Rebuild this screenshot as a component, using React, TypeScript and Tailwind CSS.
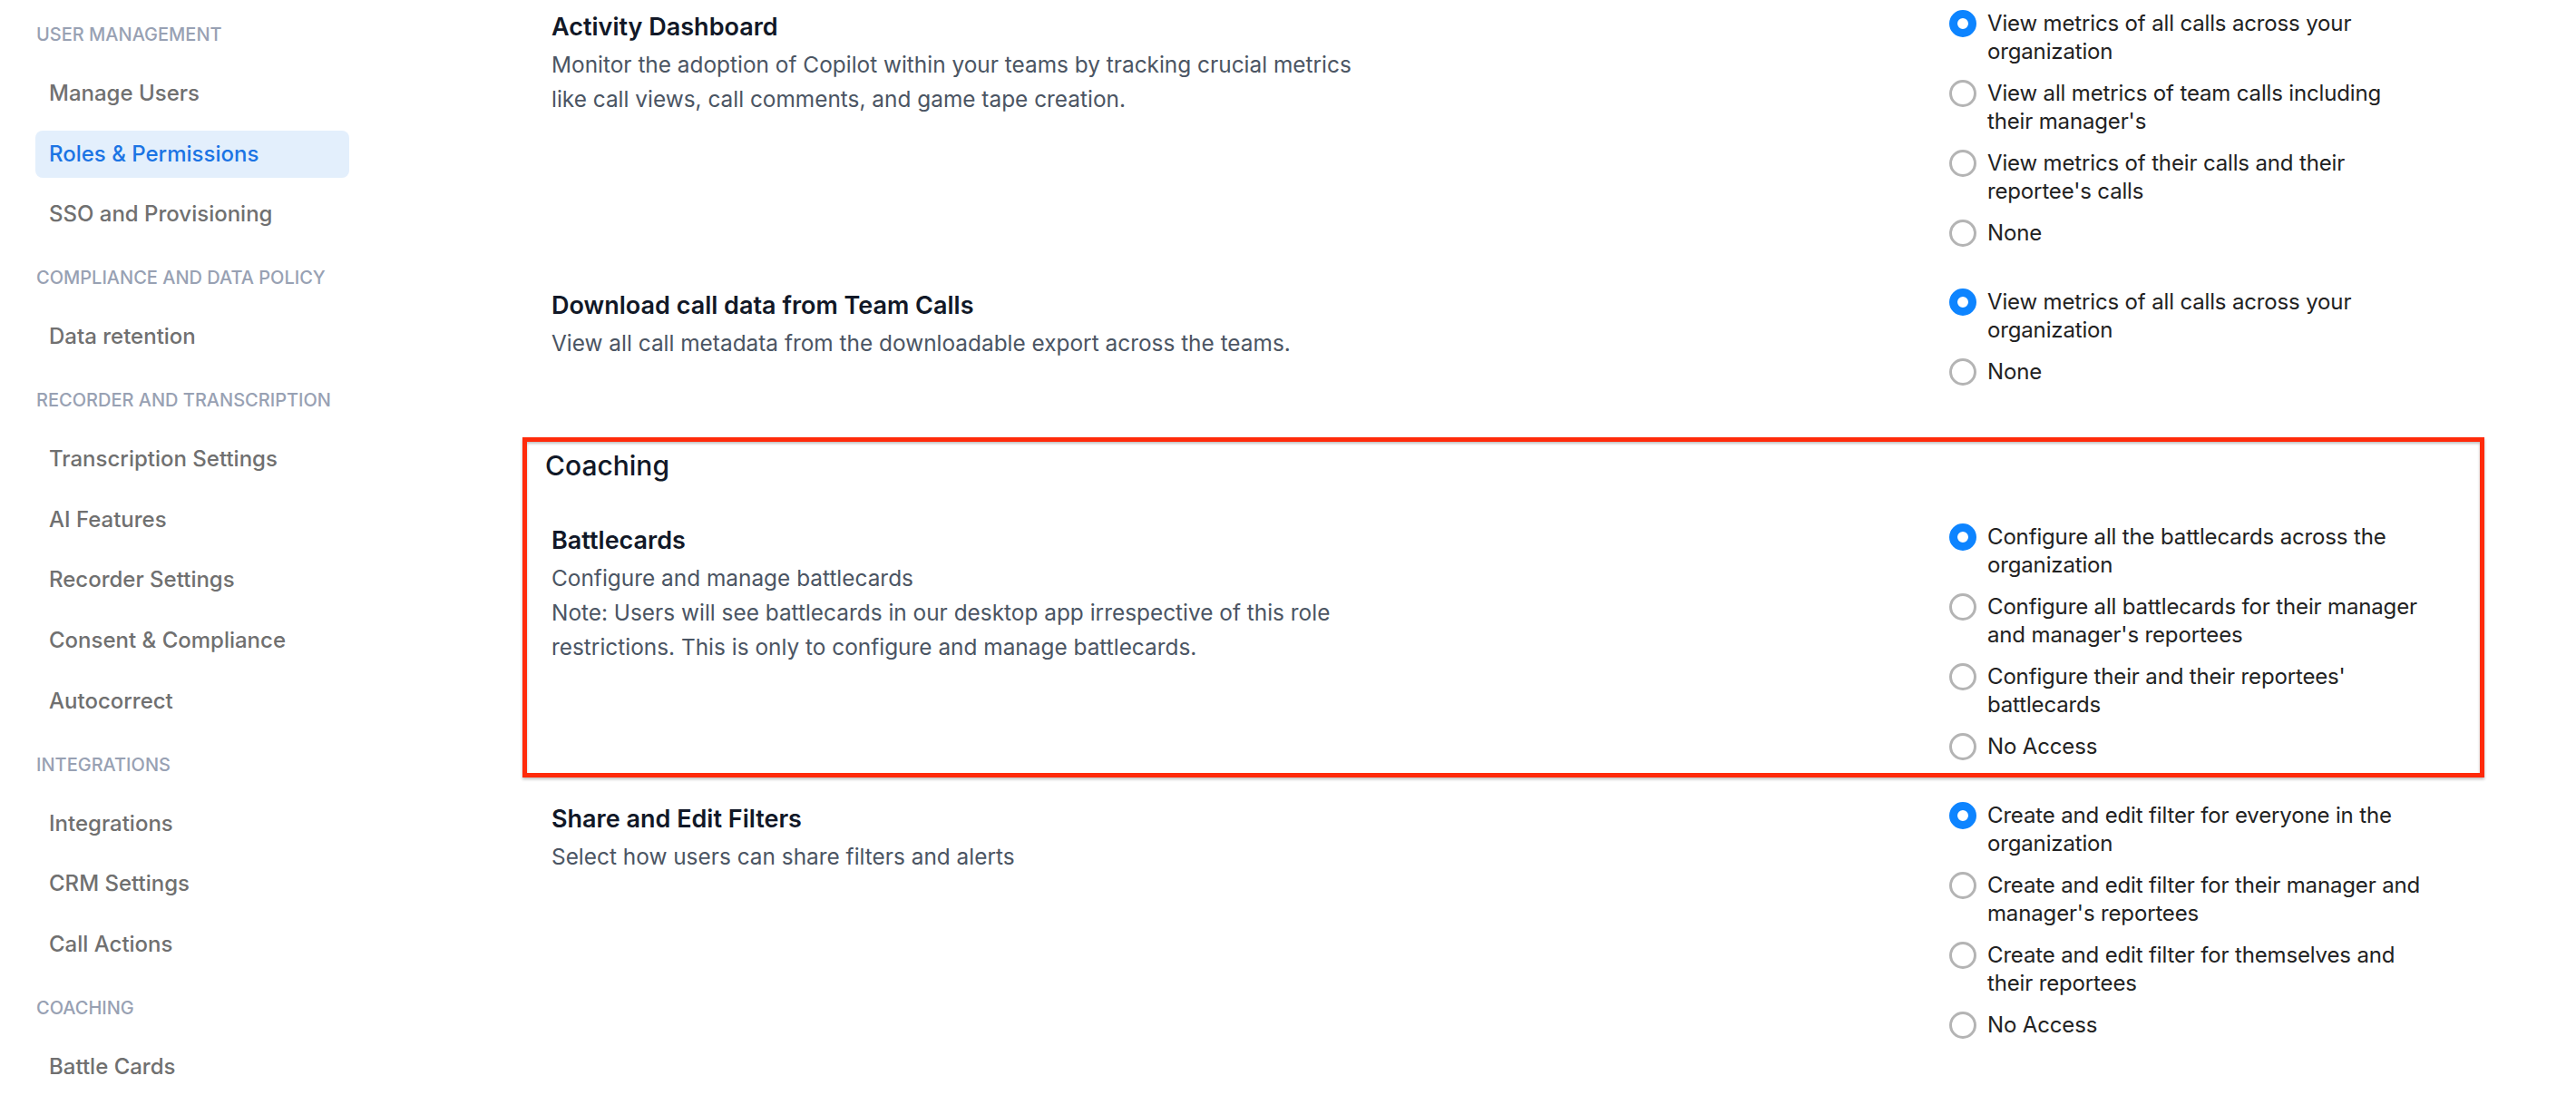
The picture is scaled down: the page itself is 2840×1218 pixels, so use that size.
const nav = [
  { label: "USER MANAGEMENT", items: ["Manage Users", "Roles & Permissions", "SSO and Provisioning"] },
  { label: "COMPLIANCE AND DATA POLICY", items: ["Data retention"] },
  {
    label: "RECORDER AND TRANSCRIPTION",
    items: ["Transcription Settings", "AI Features", "Recorder Settings", "Consent & Compliance", "Autocorrect"],
  },
  { label: "INTEGRATIONS", items: ["Integrations", "CRM Settings", "Call Actions"] },
  { label: "COACHING", items: ["Battle Cards"] },
];

type Perm = { title: string; desc: string[]; options: string[] };

const activity: Perm = {
  title: "Activity Dashboard",
  desc: [
    "Monitor the adoption of Copilot within your teams by tracking crucial metrics like call views, call comments, and game tape creation.",
  ],
  options: [
    "View metrics of all calls across your organization",
    "View all metrics of team calls including their manager's",
    "View metrics of their calls and their reportee's calls",
    "None",
  ],
};

const download: Perm = {
  title: "Download call data from Team Calls",
  desc: ["View all call metadata from the downloadable export across the teams."],
  options: ["View metrics of all calls across your organization", "None"],
};

const battlecards: Perm = {
  title: "Battlecards",
  desc: [
    "Configure and manage battlecards",
    "Note: Users will see battlecards in our desktop app irrespective of this role restrictions. This is only to configure and manage battlecards.",
  ],
  options: [
    "Configure all the battlecards across the organization",
    "Configure all battlecards for their manager and manager's reportees",
    "Configure their and their reportees' battlecards",
    "No Access",
  ],
};

const filters: Perm = {
  title: "Share and Edit Filters",
  desc: ["Select how users can share filters and alerts"],
  options: [
    "Create and edit filter for everyone in the organization",
    "Create and edit filter for their manager and manager's reportees",
    "Create and edit filter for themselves and their reportees",
    "No Access",
  ],
};

function Radio({ checked }: { checked: boolean }) {
  return checked ? (
    <span className="mt-px h-[30px] w-[30px] shrink-0 rounded-full border-[9px] border-[#0d84ff] bg-white" />
  ) : (
    <span className="mt-px h-[30px] w-[30px] shrink-0 rounded-full border-[3px] border-[#b4b4b4] bg-white" />
  );
}

function PermRow({ perm, className = "" }: { perm: Perm; className?: string }) {
  return (
    <div className={`grid grid-cols-[1541px_1fr] ${className}`}>
      <div className="pt-[2px]">
        <div className="text-[27px] font-semibold leading-[36px] text-[#111827]">{perm.title}</div>
        <div className="mt-[4px] max-w-[910px] text-[24.4px] leading-[38px] text-[#4b5563]">
          {perm.desc.map((d) => (
            <p key={d}>{d}</p>
          ))}
        </div>
      </div>
      <div className="flex flex-col gap-[15px]">
        {perm.options.map((o, i) => (
          <label key={o} className="flex items-start gap-[12px]">
            <Radio checked={i === 0} />
            <span className="max-w-[484px] text-[24px] leading-[31px] tracking-[-0.15px] text-[#222]">{o}</span>
          </label>
        ))}
      </div>
    </div>
  );
}

export default function App() {
  return (
    <div className="flex h-[1218px] overflow-hidden bg-white font-['Inter',sans-serif]">
      <aside className="w-[424px] shrink-0 px-[39px] pt-[24px]">
        {nav.map((sec) => (
          <div key={sec.label} className="mb-[30px]">
            <div className="h-[28px] pl-px text-[20px] font-medium leading-[28px] text-[#98a1b3]">{sec.label}</div>
            <ul className="mt-[25px] flex flex-col gap-[14.6px]">
              {sec.items.map((item) => {
                const active = item === "Roles & Permissions";
                return (
                  <li
                    key={item}
                    className={`flex h-[52px] items-center rounded-[8px] px-[15px] text-[24px] font-medium ${
                      active ? "bg-[#e3effc] text-[#1b74e4]" : "text-[#707070]"
                    }`}
                  >
                    {item}
                  </li>
                );
              })}
            </ul>
          </div>
        ))}
      </aside>

      <main className="w-[2315px] shrink-0 pl-[152px] pt-[10px]">
        <PermRow perm={activity} className="pl-[32px]" />
        <PermRow perm={download} className="mt-[45px] pl-[32px]" />

        <section className="mt-[57px] border-[5px] border-[#ff2a0a] pb-[14px] pt-[8px] shadow-[inset_0_2px_3px_rgba(0,0,0,0.25),0_2px_3px_rgba(0,0,0,0.25)]">
          <h2 className="pl-[20px] text-[30px] font-medium leading-[36px] text-[#111827]">Coaching</h2>
          <PermRow perm={battlecards} className="mt-[45px] pl-[27px]" />
        </section>

        <PermRow perm={filters} className="mt-[26px] pl-[32px]" />
      </main>
    </div>
  );
}
